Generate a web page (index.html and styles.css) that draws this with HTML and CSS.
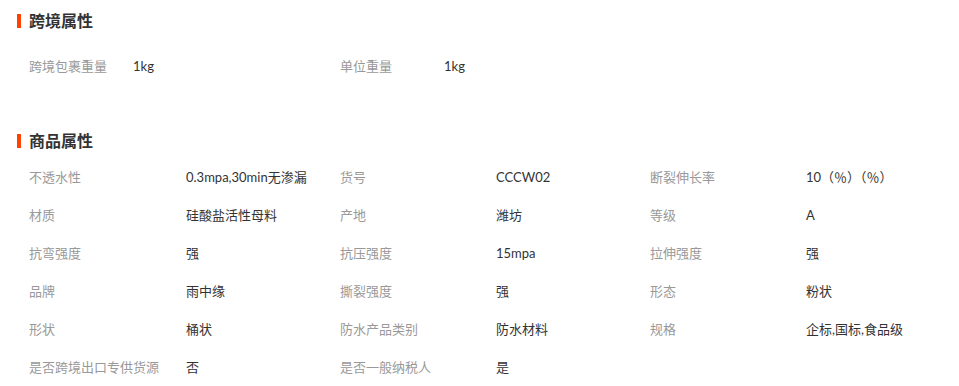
FILE: index.html
```html
<!DOCTYPE html>
<html lang="zh-CN">
<head>
<meta charset="utf-8">
<link rel="stylesheet" href="styles.css">
</head>
<body>
<div class="page">
  <section class="section">
    <h2 class="title"><span class="bar"></span>跨境属性</h2>
    <div class="grid grid-cross">
      <div class="label">跨境包裹重量</div><div class="value">1kg</div>
      <div class="label">单位重量</div><div class="value">1kg</div>
    </div>
  </section>
  <section class="section section-goods">
    <h2 class="title"><span class="bar"></span>商品属性</h2>
    <div class="grid grid-goods">
      <div class="label">不透水性</div><div class="value">0.3mpa,30min无渗漏</div>
      <div class="label">货号</div><div class="value">CCCW02</div>
      <div class="label">断裂伸长率</div><div class="value">10（％）（％）</div>

      <div class="label">材质</div><div class="value">硅酸盐活性母料</div>
      <div class="label">产地</div><div class="value">潍坊</div>
      <div class="label">等级</div><div class="value">A</div>

      <div class="label">抗弯强度</div><div class="value">强</div>
      <div class="label">抗压强度</div><div class="value">15mpa</div>
      <div class="label">拉伸强度</div><div class="value">强</div>

      <div class="label">品牌</div><div class="value">雨中缘</div>
      <div class="label">撕裂强度</div><div class="value">强</div>
      <div class="label">形态</div><div class="value">粉状</div>

      <div class="label">形状</div><div class="value">桶状</div>
      <div class="label">防水产品类别</div><div class="value">防水材料</div>
      <div class="label">规格</div><div class="value">企标,国标,食品级</div>

      <div class="label">是否跨境出口专供货源</div><div class="value">否</div>
      <div class="label">是否一般纳税人</div><div class="value">是</div>
      <div class="label"></div><div class="value"></div>
    </div>
  </section>
</div>
</body>
</html>
```
FILE: styles.css
```css
html, body {
  margin: 0;
  padding: 0;
  background: #fff;
}
body {
  font-family: Lato, "Noto Sans CJK SC", sans-serif;
  font-size: 13px;
  color: #333;
}
.page {
  width: 959px;
  height: 386px;
  overflow: hidden;
}
.section {
  padding-left: 17px;
}
.title {
  display: flex;
  align-items: center;
  gap: 8px;
  height: 20px;
  margin: 11px 0 0;
  font-size: 16px;
  font-weight: bold;
  color: #333;
  line-height: 20px;
}
.bar {
  display: block;
  width: 4px;
  height: 14px;
  background: #ff4200;
}
.grid {
  display: grid;
  padding-left: 12px;
}
.grid-cross {
  grid-template-columns: 104px 207px 104px 1fr;
  margin-top: 16px;
}
.section-goods {
  margin-top: 46px;
}
.section-goods .title {
  margin-top: 0;
}
.grid-goods {
  grid-template-columns: 157px 154px 156px 154px 156px 1fr;
  margin-top: 7px;
}
.label, .value {
  height: 38px;
  line-height: 38px;
  white-space: nowrap;
}
.label {
  color: #999;
}
.value {
  color: #333;
}
```
